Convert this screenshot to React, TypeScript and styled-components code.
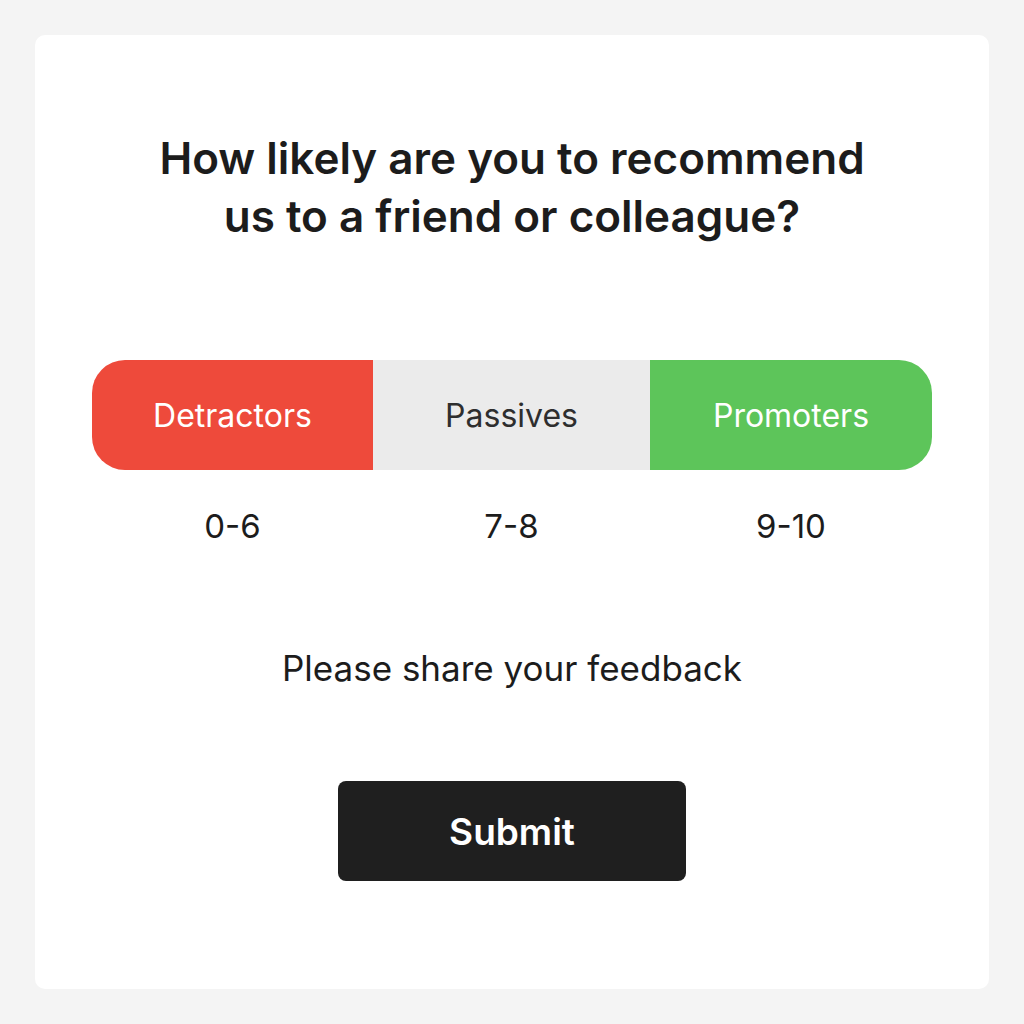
import React from "react";
import styled, { createGlobalStyle } from "styled-components";

const Global = createGlobalStyle`
  html, body {
    margin: 0;
    padding: 0;
    background: #f4f4f4;
    font-family: Inter, "Liberation Sans", sans-serif;
  }
`;

const Page = styled.div`
  width: 1024px;
  height: 1024px;
  padding: 35px;
  box-sizing: border-box;
`;

const Card = styled.div`
  width: 954px;
  height: 954px;
  background: #ffffff;
  border-radius: 10px;
  display: flex;
  flex-direction: column;
  align-items: center;
  padding: 94px 57px 0;
  box-sizing: border-box;
`;

const Title = styled.h1`
  margin: 0;
  font-size: 44px;
  line-height: 58px;
  font-weight: 600;
  color: #1c1c1c;
  text-align: center;
`;

const Scale = styled.div`
  margin-top: 115px;
  width: 840px;
  display: grid;
  grid-template-columns: 281px 277px 282px;
`;

const Segment = styled.div<{ $bg: string; $fg: string; $side?: "left" | "right" }>`
  height: 110px;
  display: flex;
  align-items: center;
  justify-content: center;
  background: ${(p) => p.$bg};
  color: ${(p) => p.$fg};
  font-size: 32px;
  font-weight: 400;
  border-radius: ${(p) =>
    p.$side === "left" ? "33px 0 0 33px" : p.$side === "right" ? "0 33px 33px 0" : "0"};
`;

const Range = styled.div`
  margin-top: 36px;
  text-align: center;
  font-size: 33px;
  color: #1c1c1c;
`;

const Feedback = styled.p`
  margin: 101px 0 0;
  font-size: 35px;
  color: #1c1c1c;
`;

const SubmitButton = styled.button`
  margin-top: 92px;
  width: 348px;
  height: 100px;
  border: none;
  border-radius: 8px;
  background: #1f1f1f;
  color: #ffffff;
  font-family: inherit;
  font-size: 37px;
  font-weight: 600;
`;

const segments = [
  { label: "Detractors", range: "0-6", bg: "#ee4a3b", fg: "#ffffff", side: "left" as const },
  { label: "Passives", range: "7-8", bg: "#ebebeb", fg: "#2e2e2e" },
  { label: "Promoters", range: "9-10", bg: "#5dc55a", fg: "#ffffff", side: "right" as const },
];

const App = () => {
  return (
    <Page>
      <Global />
      <Card>
        <Title>
          How likely are you to recommend
          <br />
          us to a friend or colleague?
        </Title>
        <Scale>
          {segments.map((s) => (
            <Segment key={s.label} $bg={s.bg} $fg={s.fg} $side={s.side}>
              {s.label}
            </Segment>
          ))}
          {segments.map((s) => (
            <Range key={s.range}>{s.range}</Range>
          ))}
        </Scale>
        <Feedback>Please share your feedback</Feedback>
        <SubmitButton>Submit</SubmitButton>
      </Card>
    </Page>
  );
};

export default App;
